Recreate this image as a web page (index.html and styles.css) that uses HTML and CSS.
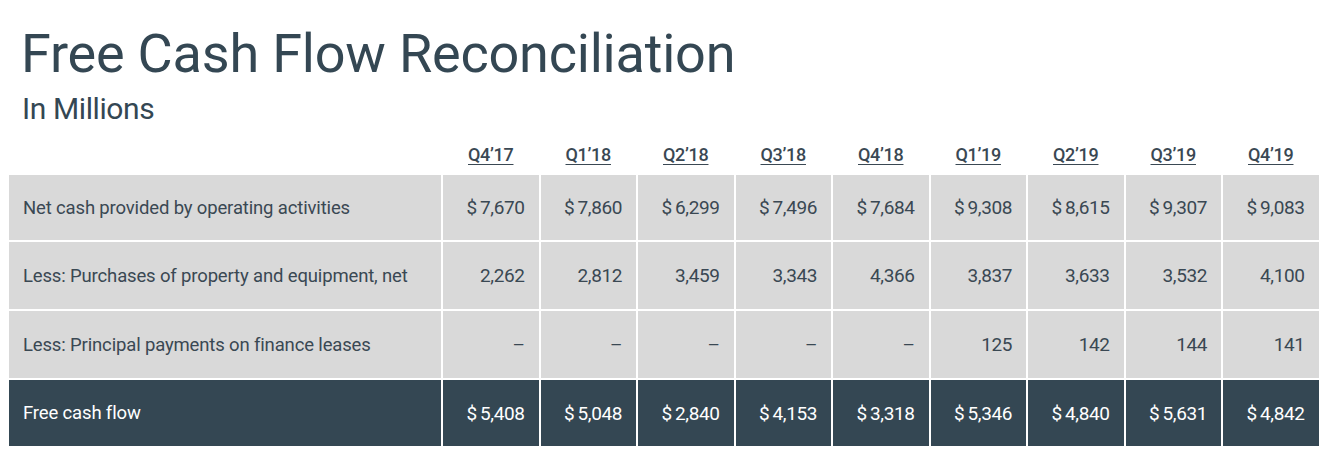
FILE: index.html
```html
<!DOCTYPE html>
<html lang="en">
<head>
<meta charset="utf-8">
<title>Free Cash Flow Reconciliation</title>
<link rel="stylesheet" href="styles.css">
</head>
<body>
<main class="page">
  <h1 class="title">Free Cash Flow Reconciliation</h1>
  <p class="subtitle">In Millions</p>
  <div class="table">
    <div class="head blank"></div>
    <div class="head"><span>Q4’17</span></div>
    <div class="head"><span>Q1’18</span></div>
    <div class="head"><span>Q2’18</span></div>
    <div class="head"><span>Q3’18</span></div>
    <div class="head"><span>Q4’18</span></div>
    <div class="head"><span>Q1’19</span></div>
    <div class="head"><span>Q2’19</span></div>
    <div class="head"><span>Q3’19</span></div>
    <div class="head"><span>Q4’19</span></div>

    <div class="cell label">Net cash provided by operating activities</div>
    <div class="cell num">$ 7,670</div>
    <div class="cell num">$ 7,860</div>
    <div class="cell num">$ 6,299</div>
    <div class="cell num">$ 7,496</div>
    <div class="cell num">$ 7,684</div>
    <div class="cell num">$ 9,308</div>
    <div class="cell num">$ 8,615</div>
    <div class="cell num">$ 9,307</div>
    <div class="cell num">$ 9,083</div>

    <div class="cell label">Less: Purchases of property and equipment, net</div>
    <div class="cell num">2,262</div>
    <div class="cell num">2,812</div>
    <div class="cell num">3,459</div>
    <div class="cell num">3,343</div>
    <div class="cell num">4,366</div>
    <div class="cell num">3,837</div>
    <div class="cell num">3,633</div>
    <div class="cell num">3,532</div>
    <div class="cell num">4,100</div>

    <div class="cell label">Less: Principal payments on finance leases</div>
    <div class="cell num">–</div>
    <div class="cell num">–</div>
    <div class="cell num">–</div>
    <div class="cell num">–</div>
    <div class="cell num">–</div>
    <div class="cell num">125</div>
    <div class="cell num">142</div>
    <div class="cell num">144</div>
    <div class="cell num">141</div>

    <div class="cell label total">Free cash flow</div>
    <div class="cell num total">$ 5,408</div>
    <div class="cell num total">$ 5,048</div>
    <div class="cell num total">$ 2,840</div>
    <div class="cell num total">$ 4,153</div>
    <div class="cell num total">$ 3,318</div>
    <div class="cell num total">$ 5,346</div>
    <div class="cell num total">$ 4,840</div>
    <div class="cell num total">$ 5,631</div>
    <div class="cell num total">$ 4,842</div>
  </div>
</main>
</body>
</html>
```

FILE: styles.css
```css
html, body {
  margin: 0;
  padding: 0;
  background: #ffffff;
}

body {
  font-family: Roboto, "Liberation Sans", Arial, sans-serif;
  color: #37474f;
}

.page {
  padding-top: 27px;
}

.title {
  margin: 0 0 0 21px;
  font-size: 54px;
  line-height: 54px;
  font-weight: 400;
  color: #344753;
  letter-spacing: -0.2px;
}

.subtitle {
  margin: 13px 0 0 22px;
  font-size: 30px;
  line-height: 30px;
  font-weight: 400;
  color: #344753;
  letter-spacing: -0.4px;
}

.table {
  margin: 20px 0 0 9px;
  display: grid;
  grid-template-columns: 432px repeat(9, 95.5px);
  grid-template-rows: 29px 65px 67px 67px 66px;
  column-gap: 2px;
  row-gap: 2px;
}

.head {
  display: flex;
  justify-content: center;
  align-items: flex-start;
  font-size: 18px;
  line-height: 22px;
  font-weight: 500;
  color: #3a4853;
  letter-spacing: -0.3px;
}

.head span {
  text-decoration: underline;
  text-decoration-thickness: 1px;
  text-underline-offset: 3px;
}

.cell {
  display: flex;
  align-items: center;
  background: #d9d9d9;
  color: #3a4853;
}

.label {
  padding-left: 14px;
  font-size: 18.5px;
  letter-spacing: -0.15px;
}

.num {
  justify-content: flex-end;
  padding-right: 14px;
  font-size: 19px;
  letter-spacing: -0.4px;
  word-spacing: -1px;
}

.total {
  background: #344753;
  color: #ffffff;
}
```
